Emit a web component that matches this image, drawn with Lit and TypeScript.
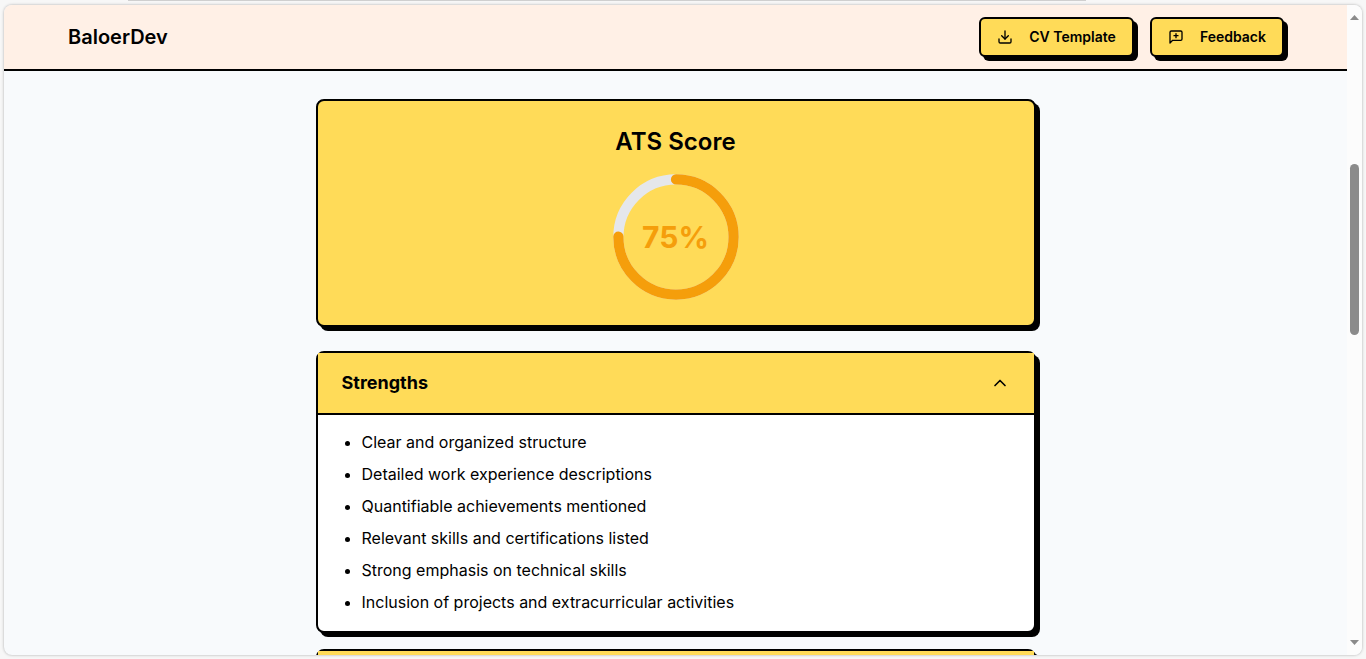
import { LitElement, html, css, svg } from "lit";
import { customElement, property, state } from "lit/decorators.js";

@customElement("score-ring")
class ScoreRing extends LitElement {
  @property({ type: Number }) value = 0;

  static styles = css`
    :host { display: grid; place-items: center; }
    .ring, .value { grid-area: 1 / 1; }
    .ring { display: block; width: 128px; height: 128px; }
    .value { color: #f59e0b; font-size: 30px; line-height: 36px; font-weight: 700; }
  `;

  render() {
    const length = 2 * Math.PI * 45;
    return html`
      <svg class="ring" viewBox="0 0 100 100" fill="none" stroke-width="8" aria-hidden="true">
        <circle cx="50" cy="50" r="45" stroke="#e5e7eb"></circle>
        <circle cx="50" cy="50" r="45" stroke="#f59e0b" stroke-linecap="round"
          stroke-dasharray=${length} stroke-dashoffset=${length * (1 - this.value / 100)}
          transform="rotate(-90 50 50)"></circle>
      </svg>
      <span class="value">${this.value}%</span>
    `;
  }
}

@customElement("result-section")
class ResultSection extends LitElement {
  @property() heading = "";
  @property({ attribute: false }) items: string[] = [];
  @state() private open = true;

  static styles = css`
    :host { display: block; }
    .section {
      border: 2px solid #000;
      border-radius: 8px;
      background: #fff;
      box-shadow: 4px 4px 0 #000;
    }
    .heading { margin: 0; font-size: 18px; line-height: 28px; }
    .toggle {
      display: flex;
      align-items: center;
      justify-content: space-between;
      width: 100%;
      padding: 16px 24px;
      border: 0;
      border-bottom: 2px solid #000;
      background: #ffdb58;
      color: #000;
      font: inherit;
      font-weight: 700;
      text-align: left;
      cursor: pointer;
    }
    .chevron { width: 20px; height: 20px; }
    .closed .chevron { transform: rotate(180deg); }
    .list {
      display: grid;
      gap: 8px;
      margin: 0;
      padding: 15px 24px 17px 44px;
      font-size: 16px;
      line-height: 24px;
    }
  `;

  render() {
    return html`
      <section class="section ${this.open ? "" : "closed"}">
        <h3 class="heading">
          <button class="toggle" aria-expanded=${this.open} @click=${() => (this.open = !this.open)}>
            ${this.heading}
            <svg class="chevron" viewBox="0 0 24 24" fill="none" stroke="currentColor" stroke-width="2"
              stroke-linecap="round" stroke-linejoin="round" aria-hidden="true">
              <path d="m18 15-6-6-6 6"></path>
            </svg>
          </button>
        </h3>
        ${this.open
          ? html`<ul class="list">${this.items.map((item) => html`<li>${item}</li>`)}</ul>`
          : ""}
      </section>
    `;
  }
}

const downloadIcon = svg`
  <path d="M21 15v4a2 2 0 0 1-2 2H5a2 2 0 0 1-2-2v-4"></path>
  <path d="m7 10 5 5 5-5"></path>
  <path d="M12 15V3"></path>`;

const feedbackIcon = svg`
  <path d="M21 15a2 2 0 0 1-2 2H7l-4 4V5a2 2 0 0 1 2-2h14a2 2 0 0 1 2 2z"></path>
  <path d="M12 7v6"></path>
  <path d="M9 10h6"></path>`;

@customElement("app-root")
class AppRoot extends LitElement {
  static styles = css`
    :host {
      display: flex;
      flex-direction: column;
      box-sizing: border-box;
      height: 100vh;
      overflow: hidden;
      background: #f7f7f7;
      color: #000;
      font-family: Inter, "Liberation Sans", sans-serif;
    }
    .edge { flex: none; height: 1px; margin: 0 280px 0 128px; background: #cfcfcf; }
    .window {
      display: grid;
      grid-template-columns: 1fr 15px;
      flex: 1;
      min-height: 0;
      margin: 4px;
      overflow: hidden;
      border-radius: 8px;
      background: #f8fafc;
      box-shadow: 0 0 3px rgba(0, 0, 0, 0.3);
    }
    .page { display: flex; flex-direction: column; min-width: 0; min-height: 0; }
    .header {
      display: flex;
      flex: none;
      align-items: center;
      justify-content: space-between;
      padding: 12px 63px 12px 64px;
      border-bottom: 2px solid #000;
      background: #fff0e6;
    }
    .brand { color: inherit; font-size: 20px; line-height: 28px; font-weight: 600; text-decoration: none; }
    .actions { display: flex; gap: 16px; }
    .action {
      display: flex;
      align-items: center;
      gap: 16px;
      padding: 8px 16px;
      border: 2px solid #000;
      border-radius: 6px;
      background: #ffdb58;
      box-shadow: 4px 4px 0 #000;
      color: #000;
      font: inherit;
      font-size: 14px;
      line-height: 20px;
      font-weight: 600;
      cursor: pointer;
    }
    .icon { width: 16px; height: 16px; }
    .results { flex: 1; min-height: 0; overflow: hidden; padding: 28px 24px 0; }
    .column { display: grid; gap: 16px; max-width: 720px; margin: 0 auto; }
    .score {
      display: grid;
      gap: 15px;
      margin-bottom: 8px;
      padding: 25px 24px 24px;
      border: 2px solid #000;
      border-radius: 8px;
      background: #ffdb58;
      box-shadow: 4px 4px 0 #000;
      text-align: center;
    }
    .title { margin: 0; font-size: 24px; line-height: 32px; font-weight: 600; }
    .scrollbar {
      display: flex;
      flex-direction: column;
      align-items: center;
      padding: 10px 0;
      background: #fcfcfc;
    }
    .arrow { width: 9px; height: 5px; fill: #8b8b8b; }
    .track { display: flex; flex-direction: column; flex: 1; }
    .before { flex: 144; }
    .thumb { flex: 171; width: 9px; border-radius: 5px; background: #8b8b8b; }
    .after { flex: 305; }
  `;

  private icon(shape: unknown) {
    return html`<svg class="icon" viewBox="0 0 24 24" fill="none" stroke="currentColor" stroke-width="2"
      stroke-linecap="round" stroke-linejoin="round" aria-hidden="true">${shape}</svg>`;
  }

  render() {
    return html`
      <div class="edge"></div>
      <div class="window">
        <div class="page">
          <header class="header">
            <a class="brand" href="#">BaloerDev</a>
            <nav class="actions">
              <button class="action">${this.icon(downloadIcon)}CV Template</button>
              <button class="action">${this.icon(feedbackIcon)}Feedback</button>
            </nav>
          </header>
          <main class="results">
            <div class="column">
              <section class="score">
                <h2 class="title">ATS Score</h2>
                <score-ring .value=${75}></score-ring>
              </section>
              <result-section
                .heading=${"Strengths"}
                .items=${[
                  "Clear and organized structure",
                  "Detailed work experience descriptions",
                  "Quantifiable achievements mentioned",
                  "Relevant skills and certifications listed",
                  "Strong emphasis on technical skills",
                  "Inclusion of projects and extracurricular activities",
                ]}></result-section>
              <result-section></result-section>
            </div>
          </main>
        </div>
        <div class="scrollbar" aria-hidden="true">
          <svg class="arrow" viewBox="0 0 9 5"><path d="M4.500 0 9 5H0z"></path></svg>
          <div class="track">
            <div class="before"></div>
            <div class="thumb"></div>
            <div class="after"></div>
          </div>
          <svg class="arrow" viewBox="0 0 9 5"><path d="M0 0h9L4.500 5z"></path></svg>
        </div>
      </div>
    `;
  }
}
